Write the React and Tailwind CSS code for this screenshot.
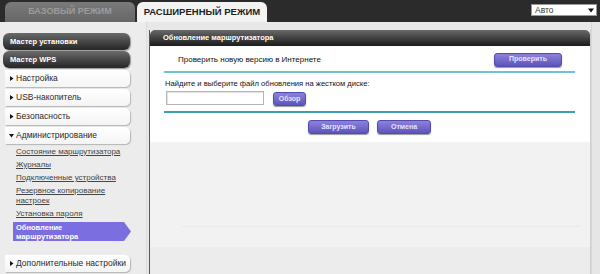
import React from "react";

const sideDark = ["Мастер установки", "Мастер WPS"];
const sideMenu = ["Настройка", "USB-накопитель", "Безопасность"];
const subLinks = [
  ["Состояние маршрутизатора"],
  ["Журналы"],
  ["Подключенные устройства"],
  ["Резервное копирование", "настроек"],
  ["Установка пароля"],
];

function Arrow({ down }) {
  return (
    <svg width="5" height="5" viewBox="0 0 5 5" className="shrink-0">
      {down ? (
        <path d="M0 1 L5 1 L2.5 4.5 Z" fill="#111" />
      ) : (
        <path d="M1 0 L4.5 2.5 L1 5 Z" fill="#111" />
      )}
    </svg>
  );
}

function MenuButton({ label, down }) {
  return (
    <div className="ml-[2px] w-[125px] h-[17px] flex items-center gap-[2px] pl-[4px] bg-linear-to-b from-white to-[#f4f4f4] rounded-r-[5px] shadow-[1px_1px_1px_#b5b5b5] text-[8.5px] text-[#2a2a2a] whitespace-nowrap">
      <Arrow down={down} />
      <span>{label}</span>
    </div>
  );
}

function PurpleButton({ children, w }) {
  return (
    <div
      className={`${w} h-[14px] flex items-center justify-center rounded-[3px] border border-[#544ab0] bg-linear-to-b from-[#8c82dd] to-[#5e54bb] shadow-[0_1px_1px_#9a9a9a] text-[7px] font-bold text-[#e4e2ff]`}
    >
      {children}
    </div>
  );
}

export default function App() {
  return (
    <div className="w-[600px] h-[274px] overflow-hidden bg-[#e8e8e8] font-['Liberation_Sans',Arial,sans-serif]">
      {/* top bar */}
      <div className="h-[22px] bg-[#2b2b2b] flex items-end pl-[5px] pr-[3px]">
        <div className="w-[130px] h-[20px] rounded-t-[6px] bg-linear-to-b from-[#7a7a7a] to-[#666] flex items-center justify-center text-[9px] font-bold text-[#9c9c9c]">
          БАЗОВЫЙ РЕЖИМ
        </div>
        <div className="ml-[2px] w-[130px] h-[20px] rounded-t-[6px] bg-[#f3f3f3] flex items-center justify-center text-[9.5px] font-bold text-[#1e1e1e]">
          РАСШИРЕННЫЙ РЕЖИМ
        </div>
        <div className="ml-auto self-start mt-[4px] w-[66px] h-[12px] bg-white border border-[#999] flex items-center justify-between pl-[3px] pr-[2px] text-[8.5px] text-[#333]">
          <span>Авто</span>
          <svg width="6" height="5" viewBox="0 0 6 5">
            <path d="M0 0.5 L6 0.5 L3 4.5 Z" fill="#111" />
          </svg>
        </div>
      </div>

      <div className="flex h-[252px]">
        {/* sidebar */}
        <div className="w-[147px] shrink-0 pl-[3px] pt-[11px] flex flex-col bg-[#ececec] border-r border-[#dcdcdc]">
          <div className="flex flex-col gap-[1px]">
            {sideDark.map((t) => (
              <div
                key={t}
                className="w-[127px] h-[17px] rounded-[6px] bg-linear-to-b from-[#6b6b6b] to-[#262626] shadow-[1px_1px_1px_#999] flex items-center pl-[7px] text-[7.5px] font-bold text-white"
              >
                {t}
              </div>
            ))}
          </div>
          <div className="flex flex-col gap-[2px] mt-[2px]">
            {sideMenu.map((t) => (
              <MenuButton key={t} label={t} />
            ))}
            <MenuButton label="Администрирование" down />
          </div>
          <div className="flex flex-col gap-[3px] mt-[3px] pl-[13px] text-[8px] leading-[10px] text-[#444]">
            {subLinks.map((lines) => (
              <div key={lines[0]} className="underline">
                {lines.map((l, i) => (
                  <div key={i}>{l}</div>
                ))}
              </div>
            ))}
          </div>
          <div className="mt-[3px] ml-[10px] w-[118px] h-[19px] pl-[3px] pt-[1px] bg-[#7a6ee0] [clip-path:polygon(0_0,calc(100%_-_7px)_0,100%_50%,calc(100%_-_7px)_100%,0_100%)] text-[7.5px] leading-[9px] font-bold text-white">
            <div>Обновление</div>
            <div>маршрутизатора</div>
          </div>
          <div className="mt-[14px]">
            <MenuButton label="Дополнительные настройки" />
          </div>
        </div>

        {/* main panel */}
        <div className="ml-[2px] mt-[8px] w-[442px] flex flex-col border-l border-[#555] border-r border-r-[#cfcfcf] bg-[#f2f2f2]">
          <div className="h-[16px] rounded-t-[5px] bg-linear-to-b from-[#6a6a6a] to-[#1c1c1c] flex items-center pl-[13px] text-[7.5px] font-bold text-white">
            Обновление маршрутизатора
          </div>
          <div className="bg-white pl-[14px] pr-[15px] pb-[8px] text-[8px] text-[#111]">
            <div className="pt-[7px] h-[20px] flex items-center justify-between">
              <span className="pl-[14px]">Проверить новую версию в Интернете</span>
              <div className="mr-[13px]">
                <PurpleButton w="w-[68px]">Проверить</PurpleButton>
              </div>
            </div>
            <div className="mt-[5px] h-[2px] bg-[#6fc2d0]" />
            <div className="mt-[5px] leading-[11px] pl-[1px] text-[7.6px]">
              Найдите и выберите файл обновления на жестком диске:
            </div>
            <div className="mt-[2px] flex items-start">
              <div className="ml-[2px] w-[98px] h-[14px] border border-[#b5b5b5] bg-white shadow-[inset_1px_1px_1px_#e0e0e0]" />
              <div className="ml-[9px] mt-[1px]">
                <PurpleButton w="w-[33px]">Обзор</PurpleButton>
              </div>
            </div>
            <div className="mt-[5px] h-[2px] bg-[#3f9db3]" />
            <div className="mt-[7px] flex justify-center gap-[8px]">
              <PurpleButton w="w-[61px]">Загрузить</PurpleButton>
              <PurpleButton w="w-[54px]">Отмена</PurpleButton>
            </div>
          </div>
          <div className="flex-1 flex flex-col">
            <div className="h-[84px]" />
            <div className="ml-[32px] mr-[10px] h-[1px] bg-[#e9e9e9]" />
            <div className="h-[20px]" />
            <div className="flex-1 bg-[#ececec]" />
          </div>
        </div>
        <div className="flex-1 bg-[#e6e6e6] border-l border-[#d8d8d8]" />
      </div>
    </div>
  );
}
